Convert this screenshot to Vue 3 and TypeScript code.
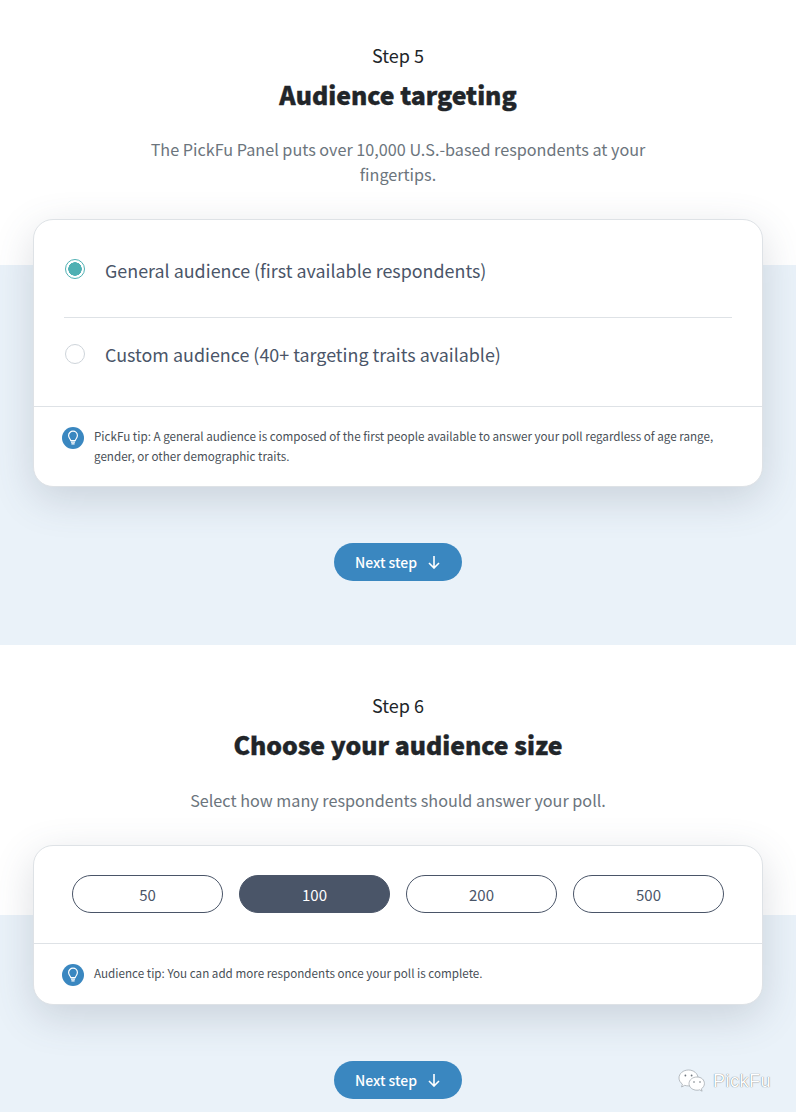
<template>
  <div class="page">
    <section class="step step-five">
      <p class="step-no">Step 5</p>
      <h2 class="step-title">Audience targeting</h2>
      <p class="step-desc">The PickFu Panel puts over 10,000 U.S.-based respondents at your fingertips.</p>

      <div class="card">
        <div class="options">
          <label v-for="(opt, i) in audiences" :key="opt" class="option">
            <span class="radio" :class="{ checked: i === 0 }"></span>
            <span>{{ opt }}</span>
          </label>
        </div>
        <div class="tip">
          <span class="tip-icon">
            <svg width="14" height="16" viewBox="0 0 14 16" fill="none" stroke="#fff" stroke-width="1.2">
              <path d="M4.8 10.6C4.6 9.2 2.6 8.2 2.6 5.6a4.4 4.4 0 0 1 8.8 0c0 2.6-2 3.6-2.2 5z" />
              <path d="M5 12.2h4M5.4 13.8h3.2" />
            </svg>
          </span>
          <p>PickFu tip: A general audience is composed of the first people available to answer your poll regardless of age range, gender, or other demographic traits.</p>
        </div>
      </div>

      <button class="next-btn">
        Next step
        <svg width="14" height="14" viewBox="0 0 14 14" fill="none" stroke="#fff" stroke-width="1.6">
          <path d="M7 1v12M2 8l5 5 5-5" />
        </svg>
      </button>
    </section>

    <section class="step step-six">
      <p class="step-no">Step 6</p>
      <h2 class="step-title">Choose your audience size</h2>
      <p class="step-desc">Select how many respondents should answer your poll.</p>

      <div class="card">
        <div class="sizes">
          <button v-for="n in sizes" :key="n" class="size" :class="{ active: n === 100 }">{{ n }}</button>
        </div>
        <div class="tip tip-single">
          <span class="tip-icon">
            <svg width="14" height="16" viewBox="0 0 14 16" fill="none" stroke="#fff" stroke-width="1.2">
              <path d="M4.8 10.6C4.6 9.2 2.6 8.2 2.6 5.6a4.4 4.4 0 0 1 8.8 0c0 2.6-2 3.6-2.2 5z" />
              <path d="M5 12.2h4M5.4 13.8h3.2" />
            </svg>
          </span>
          <p>Audience tip: You can add more respondents once your poll is complete.</p>
        </div>
      </div>

      <button class="next-btn">
        Next step
        <svg width="14" height="14" viewBox="0 0 14 14" fill="none" stroke="#fff" stroke-width="1.6">
          <path d="M7 1v12M2 8l5 5 5-5" />
        </svg>
      </button>
    </section>

    <div class="watermark">
      <svg width="28" height="24" viewBox="0 0 28 24">
        <g fill="#fff" stroke="#8d939a" stroke-width="0.6">
          <path d="M10.500 1C5.300 1 1 4.500 1 9c0 2.500 1.300 4.600 3.400 6.100L3.600 18l3.100-1.700c1.200.4 2.400.6 3.800.6 5.200 0 9.500-3.500 9.500-7.900S15.700 1 10.500 1z" />
          <path d="M19 8c-4.400 0-8 2.900-8 6.600s3.600 6.600 8 6.600c.9 0 1.800-.1 2.600-.4l2.500 1.400-.7-2.400c1.800-1.200 3-3.100 3-5.200C26.400 10.900 23.400 8 19 8z" />
        </g>
        <g fill="#6f767e">
          <circle cx="7.400" cy="6.500" r="0.9" />
          <circle cx="13.600" cy="6.500" r="0.9" />
          <circle cx="16" cy="13" r="0.8" />
          <circle cx="22" cy="13" r="0.8" />
        </g>
      </svg>
      <span>PickFu</span>
    </div>
  </div>
</template>

<script setup lang="ts">
const audiences: string[] = [
  'General audience (first available respondents)',
  'Custom audience (40+ targeting traits available)',
];

const sizes: number[] = [50, 100, 200, 500];
</script>

<style>
html,
body {
  margin: 0;
  background: #fff;
}
</style>

<style scoped>
.page {
  position: relative;
  width: 796px;
  height: 1112px;
  overflow: hidden;
  font-family: "Noto Sans CJK SC", "Noto Sans", sans-serif;
  color: #4a5568;
}

.step {
  box-sizing: border-box;
  display: flex;
  flex-direction: column;
  align-items: center;
  text-align: center;
}

.step-five {
  height: 645px;
  padding-top: 43px;
  background: linear-gradient(#fff 265px, #eaf2f9 265px);
}

.step-six {
  height: 467px;
  padding-top: 48px;
  background: linear-gradient(#fff 270px, #eaf2f9 270px);
}

.step-no {
  margin: 0;
  font-size: 18px;
  line-height: 24px;
  color: #212529;
}

.step-title {
  margin: 8px 0 0;
  font-size: 24.8px;
  line-height: 38px;
  font-weight: 900;
  color: #212529;
  -webkit-text-stroke: 0.4px #212529;
}

.step-desc {
  width: 520px;
  margin: 24px 0 33px;
  font-size: 16.2px;
  line-height: 24.5px;
  color: #6c757d;
}

.step-six .step-desc {
  margin: 25px 0 32.5px;
}

.card {
  box-sizing: border-box;
  width: 730px;
  background: #fff;
  border: 1px solid #dee2e6;
  border-radius: 20px;
  box-shadow: 0 12px 40px rgba(74, 85, 104, 0.2);
  text-align: left;
}

.options {
  padding: 12px 30px 16px;
}

.option {
  box-sizing: border-box;
  display: flex;
  align-items: center;
  gap: 20px;
  height: 76px;
  font-size: 17.9px;
  color: #4a5568;
}

.option + .option {
  height: 73px;
  margin-top: 9px;
  border-top: 1px solid #dee2e6;
}

.radio {
  box-sizing: border-box;
  flex: none;
  width: 20px;
  height: 20px;
  margin: -2px 0 0 1px;
  border: 1px solid #ced4da;
  border-radius: 50%;
  background: #fff;
}

.option + .option .radio {
  margin-top: 0;
}

.radio.checked {
  border-color: #4fb0b3;
  background: radial-gradient(circle, #4fb0b3 6.5px, #fff 7px);
}

.tip {
  display: flex;
  gap: 10px;
  padding: 19px 40px 20px 28px;
  border-top: 1px solid #dee2e6;
}

.tip-single {
  padding-bottom: 18px;
}

.tip p {
  margin: 0;
  font-size: 11.65px;
  line-height: 20px;
  color: #495057;
}

.tip-icon {
  display: flex;
  flex: none;
  align-items: center;
  justify-content: center;
  width: 22px;
  height: 22px;
  margin-top: 1px;
  border-radius: 50%;
  background: #3a87c0;
}

.sizes {
  display: grid;
  grid-template-columns: repeat(4, 151px);
  justify-content: center;
  gap: 16px;
  padding: 29px 0 30px;
}

.size {
  height: 38px;
  padding: 0;
  border: 1px solid #4a5568;
  border-radius: 19px;
  background: #fff;
  font: inherit;
  font-size: 15px;
  color: #4a5568;
}

.size.active {
  background: #4a5568;
  color: #fff;
}

.next-btn {
  display: flex;
  align-items: center;
  justify-content: center;
  gap: 10px;
  width: 128px;
  height: 38px;
  margin-top: 56px;
  padding: 0;
  border: none;
  border-radius: 19px;
  background: #3a87c0;
  font: inherit;
  font-size: 14px;
  font-weight: 500;
  color: #fff;
}

.watermark {
  position: absolute;
  right: 25px;
  bottom: 19px;
  display: flex;
  align-items: center;
  gap: 7px;
  font-family: "Liberation Sans", sans-serif;
  font-size: 18px;
  letter-spacing: 0.5px;
  color: #fff;
  text-shadow: 0 0 1px #3f4850;
}
</style>
